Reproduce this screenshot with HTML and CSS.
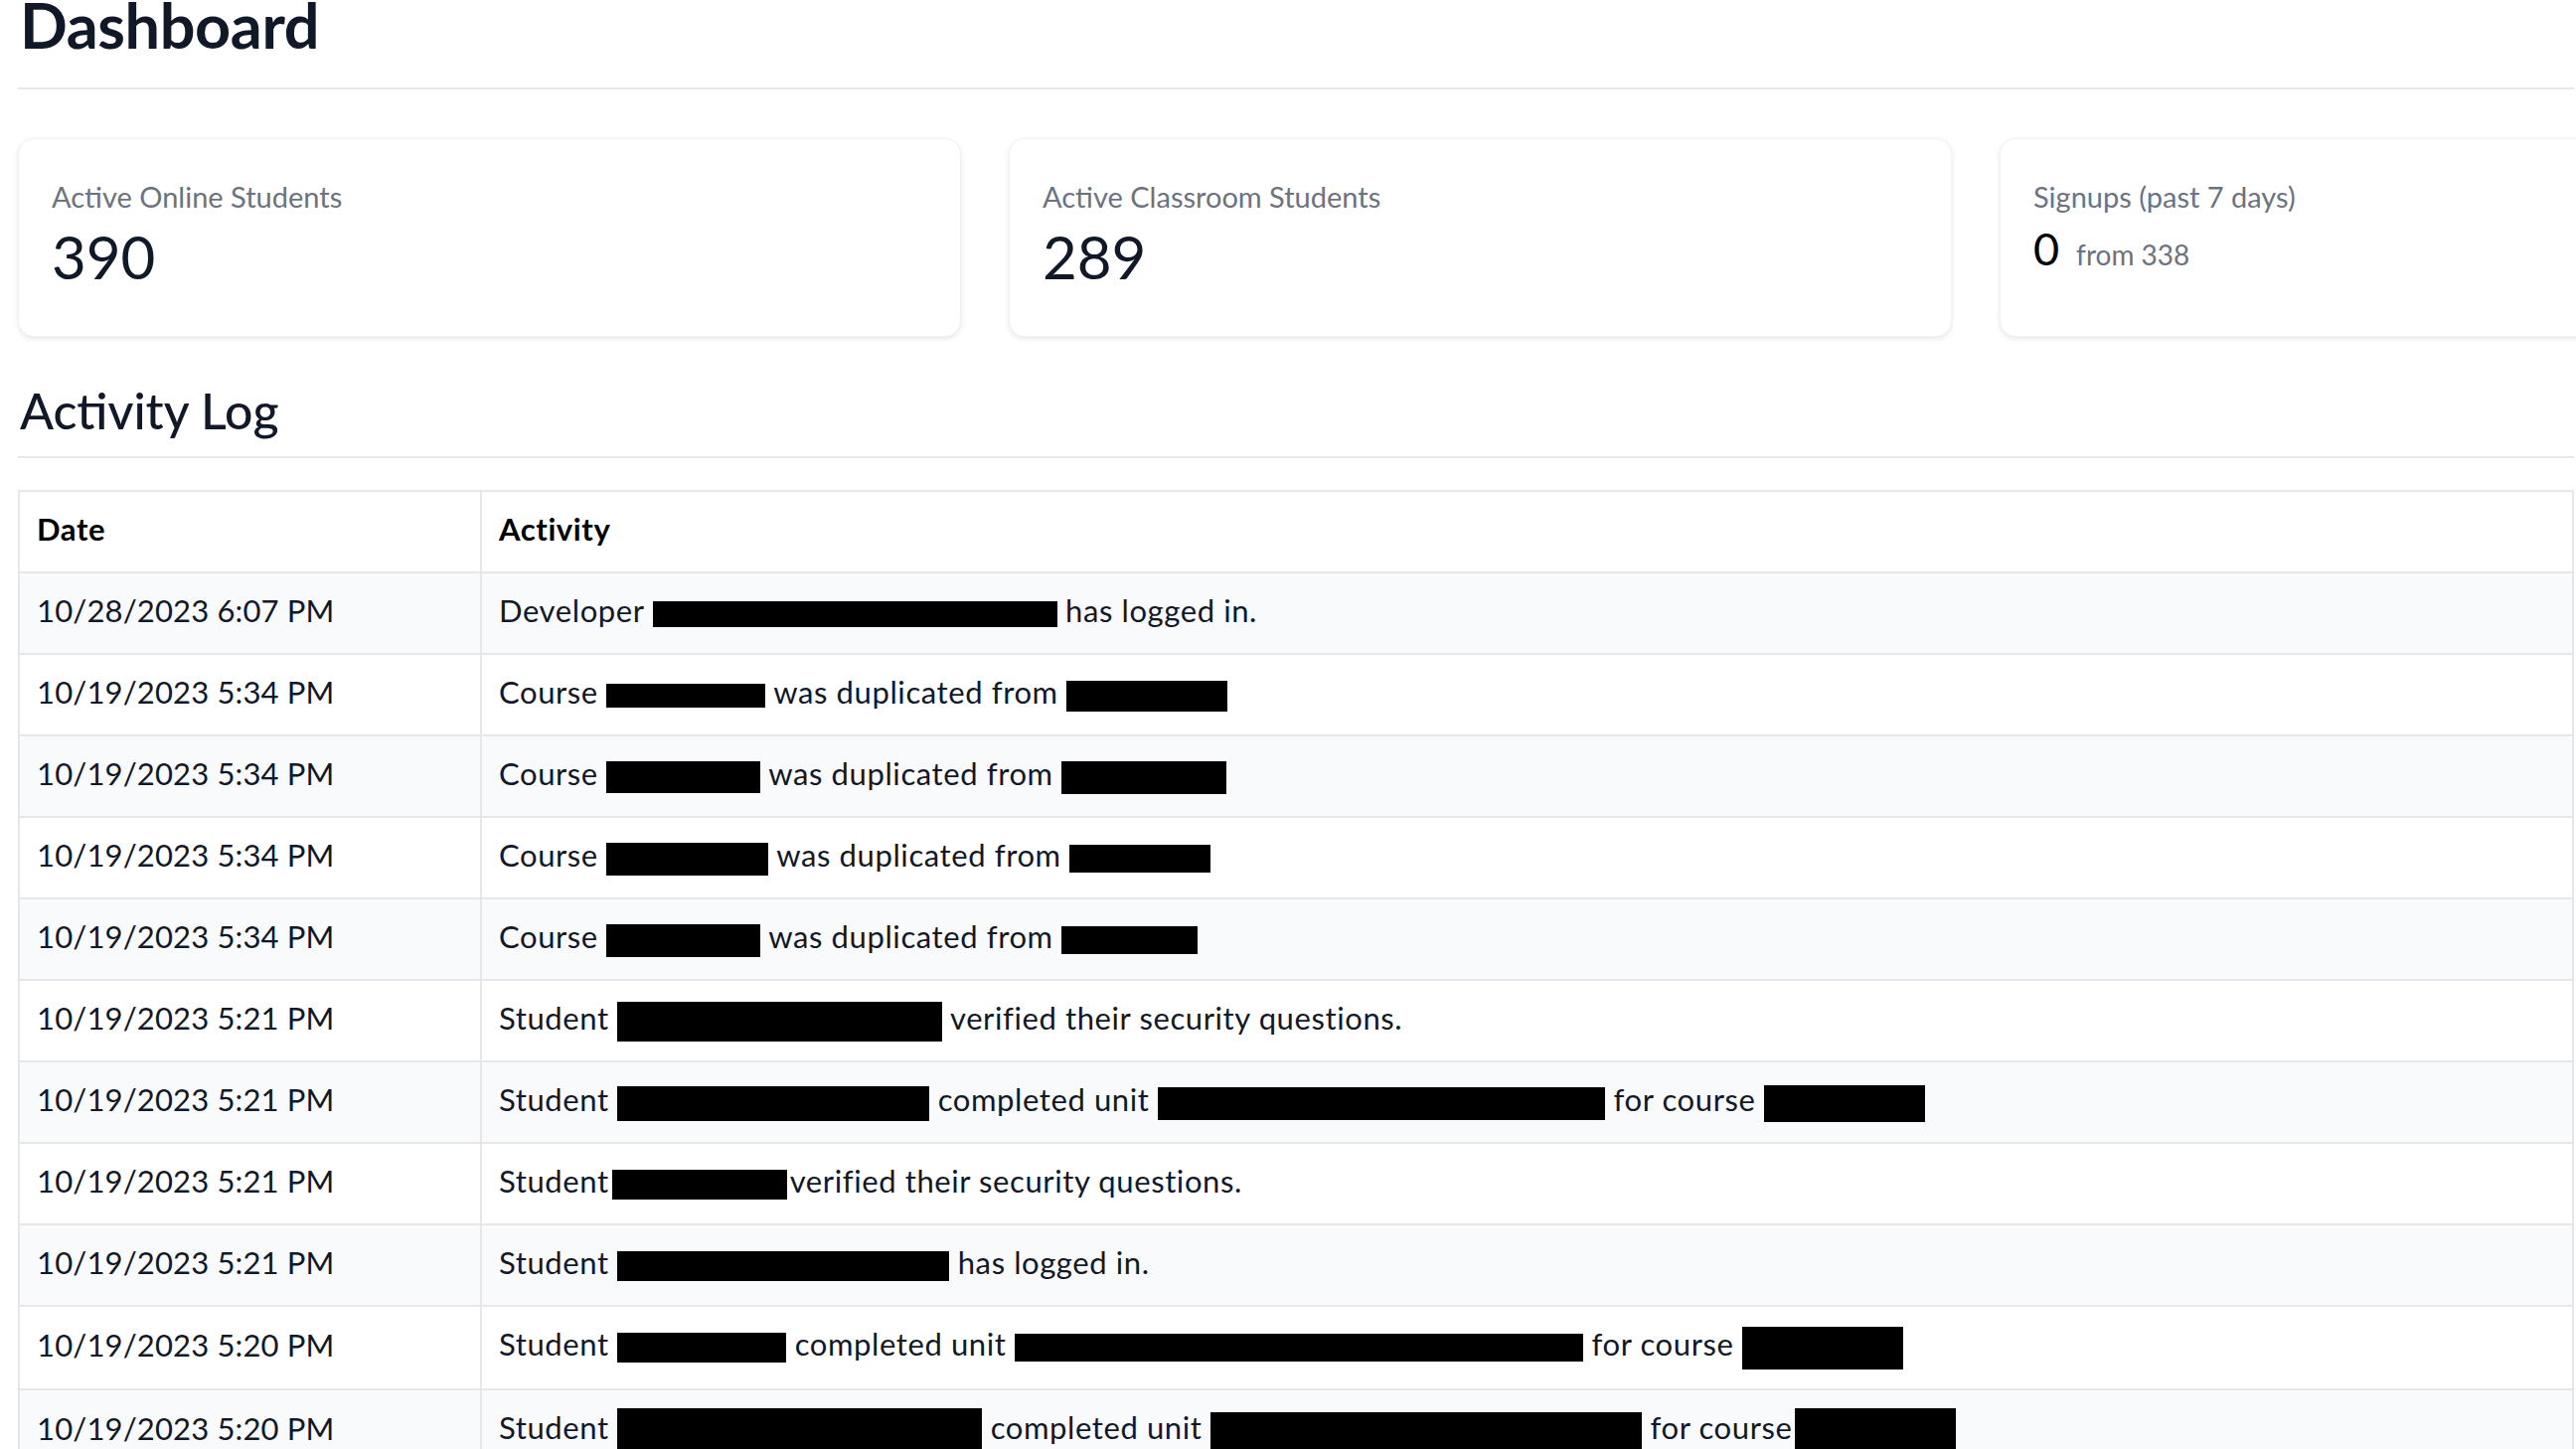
FILE: index.html
```html
<!DOCTYPE html>
<html lang="en">
<head>
<meta charset="utf-8">
<title>Dashboard</title>
<link rel="stylesheet" href="styles.css">
</head>
<body>
<main class="page">
  <header class="page-header">
    <h1 class="page-title">Dashboard</h1>
  </header>

  <section class="stats">
    <div class="stat-card">
      <div class="stat-label">Active Online Students</div>
      <div class="stat-value">390</div>
    </div>
    <div class="stat-card">
      <div class="stat-label">Active Classroom Students</div>
      <div class="stat-value">289</div>
    </div>
    <div class="stat-card">
      <div class="stat-label">Signups (past 7 days)</div>
      <div class="stat-row">
        <span class="stat-value-sm">0</span>
        <span class="stat-from">from 338</span>
      </div>
    </div>
  </section>

  <header class="section-header">
    <h2 class="section-title">Activity Log</h2>
  </header>

  <table class="log">
    <thead>
      <tr><th class="col-date">Date</th><th>Activity</th></tr>
    </thead>
    <tbody>
      <tr><td class="date">10/28/2023 6:07 PM</td><td>Developer <span class="rd" style="width:407px;height:26px"></span> has logged in.</td></tr>
      <tr><td class="date">10/19/2023 5:34 PM</td><td>Course <span class="rd" style="width:160px;height:24px"></span> was duplicated from <span class="rd" style="width:162px;height:31px"></span></td></tr>
      <tr><td class="date">10/19/2023 5:34 PM</td><td>Course <span class="rd" style="width:155px;height:32px"></span> was duplicated from <span class="rd" style="width:166px;height:33px"></span></td></tr>
      <tr><td class="date">10/19/2023 5:34 PM</td><td>Course <span class="rd" style="width:163px;height:33px"></span> was duplicated from <span class="rd" style="width:142px;height:28px"></span></td></tr>
      <tr><td class="date">10/19/2023 5:34 PM</td><td>Course <span class="rd" style="width:155px;height:33px"></span> was duplicated from <span class="rd" style="width:137px;height:28px"></span></td></tr>
      <tr><td class="date">10/19/2023 5:21 PM</td><td>Student <span class="rd" style="width:327px;height:40px"></span> verified their security questions.</td></tr>
      <tr><td class="date">10/19/2023 5:21 PM</td><td>Student <span class="rd" style="width:314px;height:35px"></span> completed unit <span class="rd" style="width:450px;height:33px"></span> for course <span class="rd" style="width:162px;height:37px"></span></td></tr>
      <tr><td class="date">10/19/2023 5:21 PM</td><td>Student<span class="rd rd-gap" style="width:176px;height:30px"></span>verified their security questions.</td></tr>
      <tr><td class="date">10/19/2023 5:21 PM</td><td>Student <span class="rd" style="width:334px;height:30px"></span> has logged in.</td></tr>
      <tr><td class="date">10/19/2023 5:20 PM</td><td>Student <span class="rd" style="width:170px;height:30px"></span> completed unit <span class="rd" style="width:572px;height:28px"></span> for course <span class="rd" style="width:162px;height:43px"></span></td></tr>
      <tr><td class="date">10/19/2023 5:20 PM</td><td>Student <span class="rd" style="width:367px;height:45px"></span> completed unit <span class="rd" style="width:434px;height:38px"></span> for course<span class="rd rd-gap" style="width:162px;height:45px"></span></td></tr>
    </tbody>
  </table>
</main>
</body>
</html>
```

FILE: styles.css
```css
* { box-sizing: border-box; }

html, body {
  margin: 0;
  padding: 0;
  background: #ffffff;
  overflow: hidden;
}

body {
  font-family: Lato, "Open Sans", "Noto Sans", sans-serif;
  color: #111827;
}

.page {
  padding: 0 2px 0 18px;
}

.page-header {
  border-bottom: 2px solid #e5e7eb;
  padding-bottom: 38px;
}

.page-title {
  margin: 0 0 0 2px;
  font-size: 63px;
  line-height: 50px;
  font-weight: 700;
  letter-spacing: -0.4px;
  color: #111827;
}

.stats {
  display: grid;
  grid-template-columns: repeat(3, 949px);
  gap: 48px;
  margin-top: 49px;
}

.stat-card {
  background: #ffffff;
  border: 1px solid #f1f2f4;
  border-radius: 16px;
  box-shadow: 0 2px 6px rgba(0, 0, 0, 0.08), 0 2px 4px -2px rgba(0, 0, 0, 0.06);
  padding: 38px 33px 48px;
  height: 200px;
}

.stat-label {
  font-size: 29px;
  line-height: 40px;
  color: #6b7280;
}

.stat-value {
  margin-top: 8px;
  font-size: 60px;
  line-height: 64px;
  color: #111827;
}

.stat-row {
  margin-top: 8px;
  display: flex;
  align-items: baseline;
  gap: 17px;
  line-height: 48px;
}

.stat-value-sm {
  font-size: 45px;
  color: #000000;
}

.stat-from {
  font-size: 28px;
  color: #6b7280;
}

.section-header {
  margin-top: 50px;
  border-bottom: 2px solid #e5e7eb;
  padding-bottom: 22px;
}

.section-title {
  margin: 0 0 0 2px;
  font-size: 50px;
  line-height: 48px;
  font-weight: 500;
  color: #111827;
}

.log {
  margin-top: 32px;
  width: 100%;
  border-collapse: collapse;
  border: 2px solid #e5e7eb;
  font-size: 31px;
  letter-spacing: 0.6px;
}

.log th,
.log td {
  border: 2px solid #e5e7eb;
  padding: 13px 17px 19px;
  line-height: 48px;
  text-align: left;
  vertical-align: middle;
  white-space: nowrap;
}

.log th {
  font-weight: 700;
  color: #000000;
  background: #ffffff;
}

.log .col-date {
  width: 465px;
}

.log .date {
  letter-spacing: 0.15px;
}

.log tbody tr:nth-child(odd) {
  background: #f9fafb;
}

.rd {
  display: inline-block;
  background: #000000;
  vertical-align: middle;
  margin: 0;
}

.rd-gap {
  margin: 0 3px;
}
```
